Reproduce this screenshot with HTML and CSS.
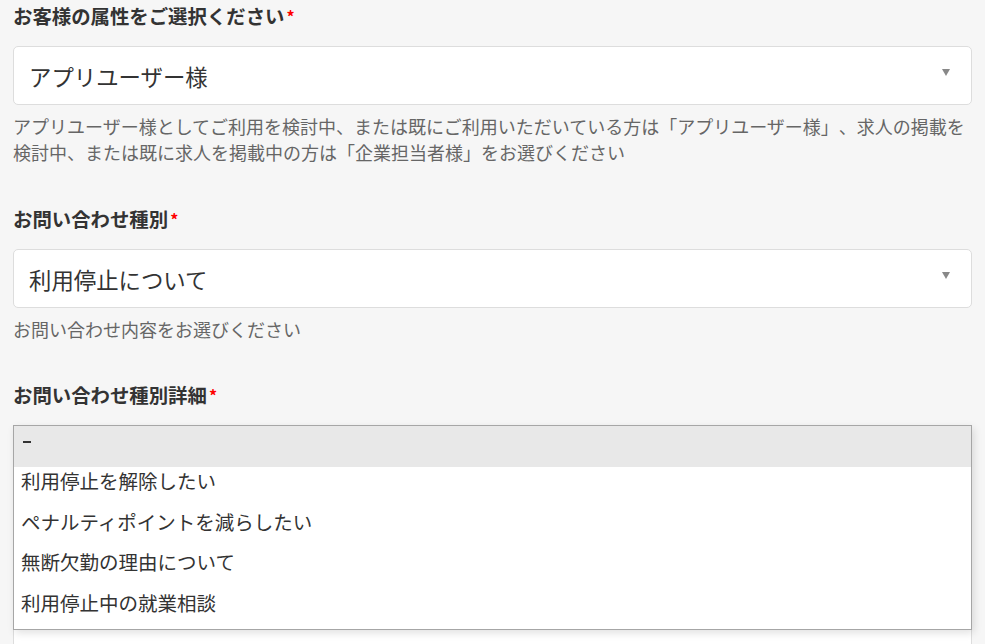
FILE: index.html
```html
<!DOCTYPE html>
<html lang="ja">
<head>
<meta charset="utf-8">
<title>お問い合わせ</title>
<link rel="stylesheet" href="styles.css">
</head>
<body>
<form class="form">
  <div class="field">
    <div class="label">お客様の属性をご選択ください<span class="req">*</span></div>
    <div class="select">
      <span class="value">アプリユーザー様</span>
      <span class="arrow"></span>
    </div>
    <p class="help">アプリユーザー様としてご利用を検討中、または既にご利用いただいている方は「アプリユーザー様」、求人の掲載を検討中、または既に求人を掲載中の方は「企業担当者様」をお選びください</p>
  </div>
  <div class="field">
    <div class="label">お問い合わせ種別<span class="req">*</span></div>
    <div class="select">
      <span class="value">利用停止について</span>
      <span class="arrow"></span>
    </div>
    <p class="help">お問い合わせ内容をお選びください</p>
  </div>
  <div class="field">
    <div class="label">お問い合わせ種別詳細<span class="req">*</span></div>
    <div class="select-wrap">
      <div class="select tall"></div>
      <ul class="listbox">
        <li class="opt active"><span class="dash"></span></li>
        <li class="opt">利用停止を解除したい</li>
        <li class="opt">ペナルティポイントを減らしたい</li>
        <li class="opt">無断欠勤の理由について</li>
        <li class="opt">利用停止中の就業相談</li>
      </ul>
    </div>
  </div>
</form>
</body>
</html>
```
FILE: styles.css
```css
html, body {
  margin: 0;
  padding: 0;
  background: #f6f6f6;
  overflow: hidden;
}
body {
  font-family: "Noto Sans CJK JP", "Noto Sans", sans-serif;
  color: #333;
  text-spacing-trim: space-all;
}
.form {
  padding: 2px 13px 0 13px;
}
.field {
  margin-bottom: 39px;
}
.field:first-child {
  margin-bottom: 40px;
}
.label {
  font-size: 19.4px;
  font-weight: bold;
  line-height: 28px;
  height: 28px;
  color: #333;
  margin-bottom: 16px;
  white-space: nowrap;
}
.req {
  color: #f00;
  font-size: 16px;
  margin-left: 2px;
  position: relative;
  top: -1px;
}
.select {
  box-sizing: border-box;
  height: 59px;
  background: #fff;
  border: 1px solid #ddd;
  border-radius: 5px;
  display: flex;
  align-items: center;
  justify-content: space-between;
  padding: 0 21px 0 15px;
}
.select .value {
  font-size: 22.4px;
  color: #333;
  line-height: 30px;
}
.arrow {
  width: 0;
  height: 0;
  border-left: 4px solid transparent;
  border-right: 4px solid transparent;
  border-top: 7px solid #888;
  margin-bottom: 7px;
}
.help {
  margin: 8px 0 0 0;
  font-size: 18px;
  line-height: 26px;
  color: #666;
}
.select-wrap {
  position: relative;
}
.select.tall {
  height: 260px;
  border-radius: 5px;
}
.listbox {
  position: absolute;
  top: 0;
  left: 0;
  right: 0;
  margin: 0;
  padding: 0;
  list-style: none;
  background: #fff;
  border: 1px solid #a6a6a6;
  box-shadow: 2px 3px 8px rgba(0, 0, 0, 0.12);
}
.opt {
  box-sizing: border-box;
  height: 40.5px;
  display: flex;
  align-items: center;
  padding: 0 0 12px 7px;
  font-size: 19.5px;
  color: #333;
}
.opt.active {
  background: #e8e8e8;
  padding: 0 0 0 9px;
}
.dash {
  display: block;
  width: 8px;
  height: 2.5px;
  background: #333;
  margin-top: -9px;
}
```
